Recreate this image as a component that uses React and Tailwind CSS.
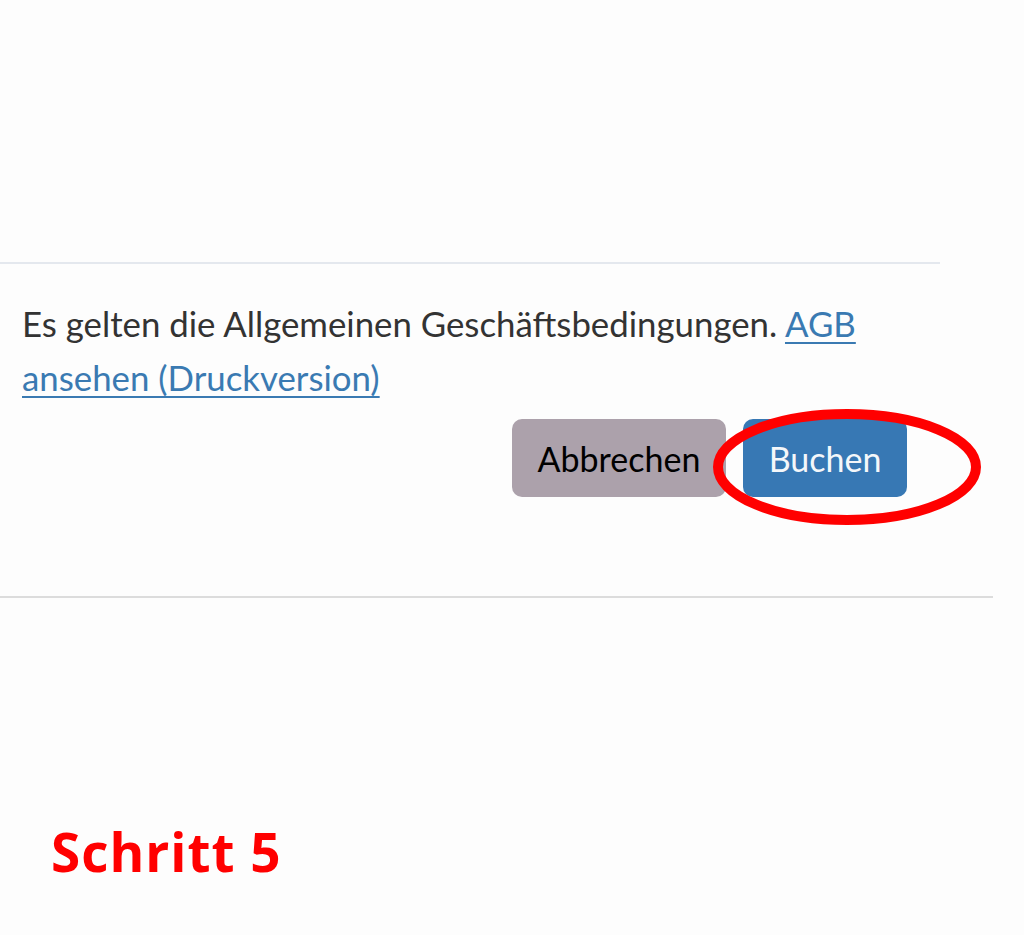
import React from 'react';

export default function App() {
  return (
    <div className="relative w-[1024px] h-[935px] bg-[#fdfdfd] overflow-hidden font-['Lato','Liberation_Sans',sans-serif]">
      <div className="h-[262px]" />
      <div className="w-[940px] border-t-2 border-[#e4e8ee]">
        <div className="pl-[22px] pr-[33px] pt-[33px]">
          <p className="text-[34.8px] leading-[54px] text-[#333333] w-[880px]">
            Es gelten die Allgemeinen Geschäftsbedingungen.{' '}
            <a href="#" className="text-[#3a7ab2] underline underline-offset-[5px] decoration-2">
              AGB ansehen (Druckversion)
            </a>
          </p>
          <div className="flex justify-end gap-[17px] mt-[14px]">
            <button className="h-[78px] w-[214px] rounded-[10px] bg-[#aca1ab] text-black text-[34px]">
              Abbrechen
            </button>
            <div className="relative">
              <button className="h-[78px] w-[164px] rounded-[10px] bg-[#3778b4] text-[#f4f7fa] text-[34px]">
                Buchen
              </button>
              <svg
                className="absolute left-[-32px] top-[-12px]"
                width="272"
                height="120"
                viewBox="0 0 272 120"
              >
                <ellipse cx="136" cy="60" rx="129" ry="53" fill="none" stroke="#ff0000" strokeWidth="10" />
              </svg>
            </div>
          </div>
        </div>
      </div>
      <div className="h-[99px]" />
      <div className="w-[993px] border-t-2 border-[#dcdcdc]" />
      <div className="pl-[51px] pt-[222px]">
        <span className="text-[53px] leading-[64px] font-bold text-[#ff0000] tracking-[1px] font-['Open_Sans',sans-serif]">
          Schritt 5
        </span>
      </div>
    </div>
  );
}
